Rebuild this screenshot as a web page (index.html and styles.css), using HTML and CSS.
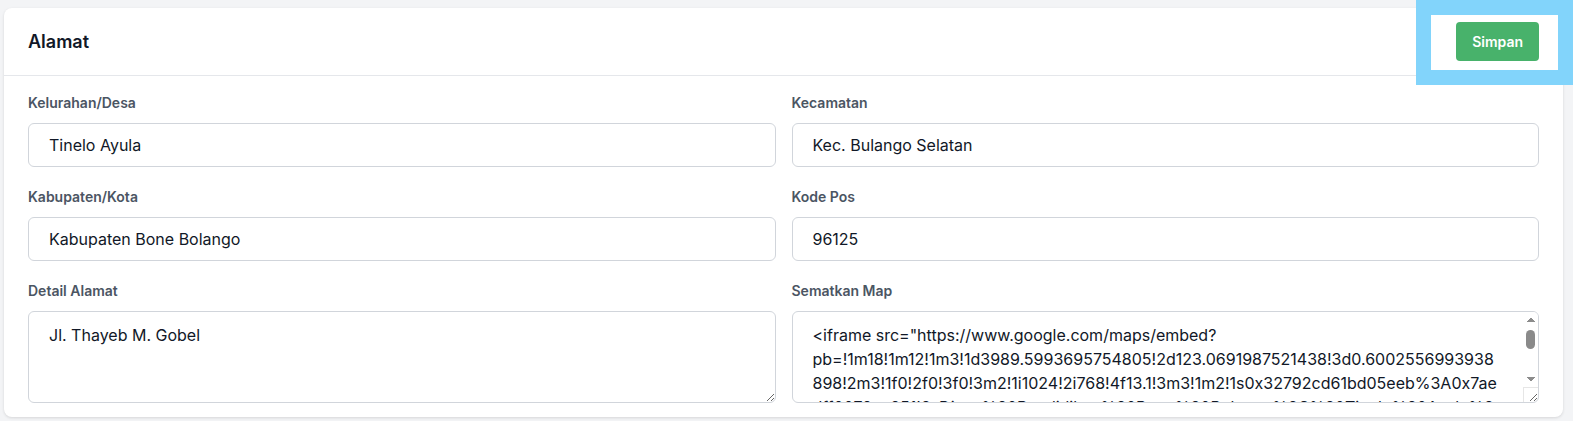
FILE: index.html
```html
<!DOCTYPE html>
<html lang="id">
<head>
    <meta charset="UTF-8">
    <meta name="viewport" content="width=device-width, initial-scale=1.0">
    <title>Alamat</title>
    <link rel="stylesheet" href="styles.css">
</head>
<body>
    <div class="card">
        <div class="card-header">
            <h2 class="card-title">Alamat</h2>
            <button class="btn-save" type="button">Simpan</button>
        </div>
        <div class="card-body">
            <div class="field">
                <label for="kelurahan">Kelurahan/Desa</label>
                <input type="text" id="kelurahan" value="Tinelo Ayula">
            </div>
            <div class="field">
                <label for="kecamatan">Kecamatan</label>
                <input type="text" id="kecamatan" value="Kec. Bulango Selatan">
            </div>
            <div class="field">
                <label for="kabupaten">Kabupaten/Kota</label>
                <input type="text" id="kabupaten" value="Kabupaten Bone Bolango">
            </div>
            <div class="field">
                <label for="kodepos">Kode Pos</label>
                <input type="text" id="kodepos" value="96125">
            </div>
            <div class="field">
                <label for="detail">Detail Alamat</label>
                <textarea id="detail">Jl. Thayeb M. Gobel</textarea>
            </div>
            <div class="field">
                <label for="map">Sematkan Map</label>
                <div class="map-wrap">
                    <textarea id="map" class="map-input"><iframe src="https://www.google.com/maps/embed?pb=!1m18!1m12!1m3!1d3989.5993695754805!2d123.0691987521438!3d0.6002556993938898!2m3!1f0!2f0!3f0!3m2!1i1024!2i768!4f13.1!3m3!1m2!1s0x32792cd61bd05eeb%3A0x7aedff0079aa851!2sDinas%20Pendidikan%20Bone%20Bolango%2C%20Tinelo%20Ayula%2C%20Kec.%20Bulango%20Selatan!5e0!3m2!1sid!2sid!4v1700000000000!5m2!1sid!2sid" width="600" height="450" style="border:0;" allowfullscreen="" loading="lazy"></iframe></textarea>
                    <!-- scrollbar drawn over the textarea -->
                    <div class="scrollbar">
                        <span class="arrow arrow-up"></span>
                        <span class="track"><span class="thumb"></span></span>
                        <span class="arrow arrow-down"></span>
                    </div>
                    <div class="corner"></div>
                </div>
            </div>
        </div>
    </div>

    <!-- highlight around the save button -->
    <div class="highlight"></div>
</body>
</html>
```

FILE: styles.css
```css
body {
    margin: 0;
    padding: 8px 10px 4px 4px;
    font-family: Inter, "Noto Sans", Arial, sans-serif;
    background-color: #f3f4f6;
    color: #111827;
}

.card {
    background-color: #fff;
    border-radius: 8px;
    box-shadow: 0 1px 3px rgba(0, 0, 0, 0.12);
}

.card-header {
    display: flex;
    justify-content: space-between;
    align-items: center;
    padding: 14px 24px;
    border-bottom: 1px solid #e5e7eb;
}

.card-title {
    margin: 0;
    font-size: 18px;
    font-weight: 600;
    color: #111827;
}

.btn-save {
    height: 39px;
    padding: 0 16px;
    background-color: #48b26b;
    color: #fff;
    font-family: inherit;
    font-size: 14px;
    font-weight: 600;
    border: none;
    border-radius: 4px;
    cursor: pointer;
}

.card-body {
    display: grid;
    grid-template-columns: 1fr 1fr;
    gap: 20px 16px;
    padding: 17px 24px 14px;
}

.field label {
    display: block;
    font-size: 14px;
    line-height: 20px;
    font-weight: 600;
    color: #4b5563;
    margin-bottom: 10px;
}

.field input,
.field textarea {
    display: block;
    width: 100%;
    box-sizing: border-box;
    border: 1px solid #d1d5db;
    border-radius: 6px;
    font-family: inherit;
    font-size: 16px;
    color: #111827;
    background-color: #fff;
    margin: 0;
}

.field input {
    height: 44px;
    padding: 0 20px;
}

.field textarea {
    height: 92px;
    padding: 11px 20px 10px;
    line-height: 24px;
    resize: vertical;
}

.map-wrap {
    position: relative;
}

.field .map-input {
    padding-right: 35px;
    overflow: hidden;
}

.scrollbar {
    position: absolute;
    top: 1px;
    right: 1px;
    width: 15px;
    height: 75px;
    display: flex;
    flex-direction: column;
    background-color: #fff;
    border-top-right-radius: 5px;
}

.arrow {
    height: 15px;
    flex-shrink: 0;
    background-repeat: no-repeat;
    background-position: center;
    background-size: 8px 5px;
}

.arrow-up {
    background-image: conic-gradient(from 141deg at 50% 0, #8c8c8c 0 78deg, transparent 0);
}

.arrow-down {
    background-image: conic-gradient(from -39deg at 50% 100%, #8c8c8c 0 78deg, transparent 0);
}

.track {
    flex-grow: 1;
    display: flex;
    justify-content: center;
}

.thumb {
    width: 9px;
    height: 19px;
    margin-top: 3px;
    background-color: #8a8a8a;
    border-radius: 5px;
}

.corner {
    position: absolute;
    right: 1px;
    bottom: 1px;
    width: 14px;
    height: 14px;
    border-top: 1px solid #e6e6e6;
    border-left: 1px solid #e6e6e6;
    pointer-events: none;
}

.highlight {
    position: absolute;
    top: 0;
    left: 1416px;
    width: 127px;
    height: 55px;
    border: 15px solid #82d4fb;
}
```
